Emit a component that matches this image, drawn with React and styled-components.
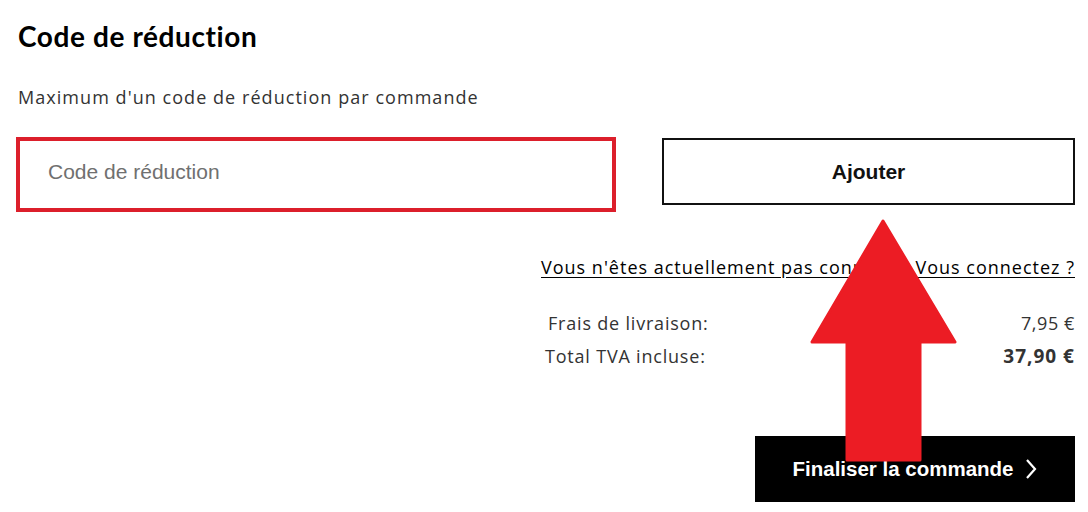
import React from 'react';
import styled, { createGlobalStyle } from 'styled-components';

const GlobalStyle = createGlobalStyle`
  html, body {
    margin: 0;
    padding: 0;
    background: #ffffff;
  }
  body {
    font-family: "Liberation Sans", Arial, sans-serif;
    color: #222;
  }
`;

const Page = styled.div`
  position: relative;
  width: 1088px;
  height: 512px;
  overflow: hidden;
  padding: 20px 13px 0 16px;
  box-sizing: border-box;
`;

const Title = styled.h2`
  margin: 0 0 0 2px;
  font-family: "Lato", sans-serif;
  font-weight: 700;
  font-size: 28px;
  line-height: 32px;
  color: #000;
  letter-spacing: 0.6px;
`;

const Hint = styled.p`
  margin: 33px 0 0 2px;
  font-family: "Open Sans", sans-serif;
  font-size: 18px;
  line-height: 24px;
  letter-spacing: 1.05px;
  color: #333;
`;

const CodeRow = styled.div`
  display: grid;
  grid-template-columns: 600px 1fr;
  gap: 46px;
  margin-top: 28px;
  align-items: start;
`;

const CodeInput = styled.input`
  box-sizing: border-box;
  width: 600px;
  height: 75px;
  border: 4px solid #dc1f2b;
  padding: 0 0 5px 28px;
  font-family: "Liberation Sans", Arial, sans-serif;
  font-size: 21px;
  color: #222;
  outline: none;
  &::placeholder {
    color: #707070;
  }
`;

const OutlineButton = styled.button`
  box-sizing: border-box;
  width: 100%;
  height: 67px;
  margin-top: 1px;
  border: 2px solid #111;
  background: #fff;
  font-family: "Liberation Sans", Arial, sans-serif;
  font-weight: 700;
  font-size: 21px;
  color: #111;
  cursor: pointer;
`;

const Summary = styled.div`
  display: flex;
  flex-direction: column;
  align-items: flex-end;
  margin-top: 43px;
`;

const LoginLink = styled.a`
  font-family: "Open Sans", sans-serif;
  font-size: 18px;
  line-height: 24px;
  letter-spacing: 1px;
  color: #000;
  text-decoration: underline;
  text-underline-offset: 3px;
`;

const Totals = styled.div`
  width: 532px;
  margin-top: 32px;
  display: flex;
  flex-direction: column;
  gap: 9px;
`;

const TotalRow = styled.div`
  display: flex;
  justify-content: space-between;
  font-family: "Open Sans", sans-serif;
  font-size: 18px;
  line-height: 24px;
  letter-spacing: 0.8px;
  color: #333;
  padding-left: ${p => p.indent || 0}px;
`;

const Amount = styled.span`
  font-weight: ${p => (p.strong ? 700 : 400)};
  font-size: ${p => (p.strong ? 19 : 18)}px;
  letter-spacing: ${p => (p.strong ? 1 : 0.6)}px;
`;

const CheckoutButton = styled.button`
  display: flex;
  align-items: center;
  justify-content: center;
  gap: 10px;
  width: 320px;
  height: 66px;
  margin-top: 68px;
  border: none;
  background: #000;
  color: #fff;
  font-family: "Liberation Sans", Arial, sans-serif;
  font-weight: 700;
  font-size: 20.5px;
  cursor: pointer;
`;

const Arrow = styled.svg`
  position: absolute;
  left: 0;
  top: 0;
  pointer-events: none;
`;

const Chevron = () => (
  <svg width="14" height="22" viewBox="0 0 14 22">
    <path d="M3 2 L11 11 L3 20" fill="none" stroke="#fff" strokeWidth="2.2" />
  </svg>
);

export default function App() {
  return (
    <Page>
      <GlobalStyle />
      <Title>Code de réduction</Title>
      <Hint>Maximum d'un code de réduction par commande</Hint>
      <CodeRow>
        <CodeInput placeholder="Code de réduction" />
        <OutlineButton>Ajouter</OutlineButton>
      </CodeRow>
      <Summary>
        <LoginLink href="#">Vous n'êtes actuellement pas connecté. Vous connectez ?</LoginLink>
        <Totals>
          <TotalRow indent={5}>
            <span>Frais de livraison:</span>
            <Amount>7,95 €</Amount>
          </TotalRow>
          <TotalRow indent={2}>
            <span>Total TVA incluse:</span>
            <Amount strong>37,90 €</Amount>
          </TotalRow>
        </Totals>
        <CheckoutButton>
          Finaliser la commande <Chevron />
        </CheckoutButton>
      </Summary>
      <Arrow width="1088" height="512">
        <polygon
          points="883,221 955,342 920,342 920,460 847,460 847,342 812,342"
          fill="#ec1c24"
          stroke="#ec1c24"
          strokeWidth="3"
          strokeLinejoin="round"
        />
      </Arrow>
    </Page>
  );
}
